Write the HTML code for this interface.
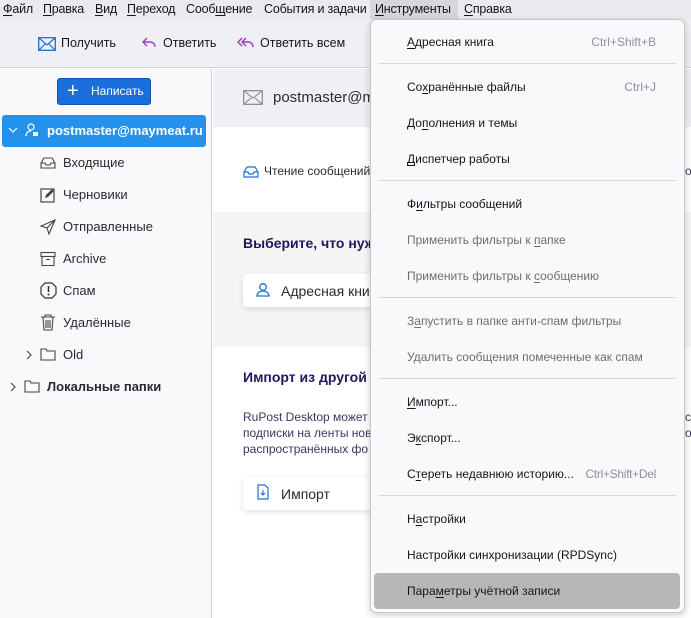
<!DOCTYPE html>
<html><head><meta charset="utf-8"><style>
*{margin:0;padding:0;box-sizing:border-box}
body{width:691px;height:618px;overflow:hidden;position:relative;background:#fff;font-family:"Liberation Sans","Noto Sans CJK SC",sans-serif;font-size:13px;color:#15141a}
.a{position:absolute;white-space:nowrap}
u{text-decoration:underline;text-underline-offset:2px}
.mb{position:absolute;top:2px;font-size:12.5px;letter-spacing:-0.2px;white-space:nowrap}
.mi{position:absolute;left:36px;font-size:12px;color:#15141a;white-space:nowrap}
.dis{color:#6e6e73}
.sc{position:absolute;right:28px;font-size:12px;color:#8f8f9d;white-space:nowrap}
.sep{position:absolute;left:8px;right:8px;height:1px;background:#d7d7db}
.fi{position:absolute;left:63px;font-size:13px;color:#2b2a33;white-space:nowrap}
.ic{position:absolute;left:40px}
</style></head><body>
<!-- menubar -->
<div class="a" style="left:0;top:0;width:691px;height:19px;background:#ebebef"></div>
<div class="a" style="left:370px;top:0;width:88px;height:19px;background:#d6d6db"></div>
<div class="mb" style="left:3px"><u>Ф</u>айл</div>
<div class="mb" style="left:43px"><u>П</u>равка</div>
<div class="mb" style="left:95px"><u>В</u>ид</div>
<div class="mb" style="left:127px"><u>П</u>ереход</div>
<div class="mb" style="left:186px">Сооб<u>щ</u>ение</div>
<div class="mb" style="left:264px">События и задачи</div>
<div class="mb" style="left:375px"><u>И</u>нструменты</div>
<div class="mb" style="left:464px"><u>С</u>правка</div>
<!-- toolbar -->
<div class="a" style="left:0;top:19px;width:691px;height:49px;background:#f0f0f4;border-bottom:1px solid #d4d4d8"></div>
<svg class="a" style="left:38px;top:37px" width="18" height="14" viewBox="0 0 18 14"><rect x=".7" y=".7" width="16.6" height="12.6" fill="none" stroke="#1a6ed8" stroke-width="1.3"/><path d="M1 1l8 7 8-7M1 13l6-6M17 13l-6-6" fill="none" stroke="#1a6ed8" stroke-width="1.2"/></svg>
<div class="a" style="left:61px;top:36px;font-size:12.5px">Получить</div>
<svg class="a" style="left:142px;top:37px" width="14" height="12" viewBox="0 0 14 12"><path d="M5 1L1 5l4 4M1 5h7c3 0 5 2 5 5" fill="none" stroke="#a03cc0" stroke-width="1.4"/></svg>
<div class="a" style="left:163px;top:36px;font-size:12.5px">Ответить</div>
<svg class="a" style="left:237px;top:37px" width="17" height="12" viewBox="0 0 17 12"><path d="M5 1L1 5l4 4M9 1L5 5l4 4M5 5h6c3 0 5 2 5 5" fill="none" stroke="#a03cc0" stroke-width="1.4"/></svg>
<div class="a" style="left:260px;top:36px;font-size:12.5px">Ответить всем</div>
<!-- sidebar -->
<div class="a" style="left:0;top:69px;width:212px;height:549px;background:#f9f9fb;border-right:1px solid #cfcfd8"></div>
<div class="a" style="left:57px;top:78px;width:94px;height:27px;background:#1a6fdc;border-radius:3px;border:1px solid #0f56b3;color:#fff;font-size:12px;line-height:25px"><span style="position:absolute;left:9px;top:0;line-height:24px;font-size:20px">+</span><span style="position:absolute;left:33px">Написать</span></div>
<div class="a" style="left:2px;top:115px;width:204px;height:32px;background:#2492ea;border-radius:3px"></div>
<svg class="a" style="left:8px;top:127px" width="10" height="7" viewBox="0 0 10 7"><path d="M1 1l4 4 4-4" fill="none" stroke="#fff" stroke-width="1.2"/></svg>
<svg class="a" style="left:25px;top:123px" width="14" height="14" viewBox="0 0 14 14"><circle cx="6" cy="4" r="3" fill="none" stroke="#fff" stroke-width="1.2"/><path d="M1 13c0-3 2-5 5-5" fill="none" stroke="#fff" stroke-width="1.2"/><rect x="8" y="9" width="5" height="4" fill="#fff"/></svg>
<div class="a" style="left:47px;top:123px;color:#fff;font-weight:bold;font-size:13px">postmaster@maymeat.ru</div>
<svg class="ic a" style="top:157px" width="16" height="12" viewBox="0 0 16 12"><path d="M1 6l3-5h8l3 5v5H1zM1 6h4l1 2h4l1-2h4" fill="none" stroke="#444" stroke-width="1.1"/></svg>
<div class="fi" style="top:155px">Входящие</div>
<svg class="ic a" style="top:187px" width="16" height="16" viewBox="0 0 16 16"><rect x="1" y="2" width="13" height="13" fill="none" stroke="#444" stroke-width="1.2"/><path d="M5 11l1-3 6-6 2 2-6 6z" fill="#444"/></svg>
<div class="fi" style="top:187px">Черновики</div>
<svg class="ic a" style="top:219px" width="16" height="16" viewBox="0 0 16 16"><path d="M15 1L1 7l6 2 2 6zM15 1L7 9" fill="none" stroke="#444" stroke-width="1.1"/></svg>
<div class="fi" style="top:219px">Отправленные</div>
<svg class="ic a" style="top:251px" width="16" height="16" viewBox="0 0 16 16"><rect x="1" y="1.5" width="14" height="4" fill="none" stroke="#444" stroke-width="1.1"/><path d="M2 5.5v9h12v-9M6 8.5h4" fill="none" stroke="#444" stroke-width="1.1"/></svg>
<div class="fi" style="top:251px">Archive</div>
<svg class="ic a" style="top:282px" width="17" height="17" viewBox="0 0 17 17"><path d="M5 1h7l4 4v7l-4 4H5l-4-4V5z" fill="none" stroke="#333" stroke-width="1.2"/><path d="M8.5 4v6" stroke="#333" stroke-width="1.6"/><circle cx="8.5" cy="12.5" r="1" fill="#333"/></svg>
<div class="fi" style="top:283px">Спам</div>
<svg class="ic a" style="top:314px" width="16" height="17" viewBox="0 0 16 17"><path d="M1 3h14M5 3V1h6v2M3 3l1 13h8l1-13M6 6v8M8 6v8M10 6v8" fill="none" stroke="#444" stroke-width="1.1"/></svg>
<div class="fi" style="top:315px">Удалённые</div>
<svg class="a" style="left:26px;top:350px" width="6" height="10" viewBox="0 0 6 10"><path d="M1 1l4 4-4 4" fill="none" stroke="#444" stroke-width="1.1"/></svg>
<svg class="a" style="left:40px;top:348px" width="16" height="13" viewBox="0 0 16 13"><path d="M1 1h5l1 2h8v9H1z" fill="none" stroke="#444" stroke-width="1.1"/></svg>
<div class="fi" style="top:347px">Old</div>
<svg class="a" style="left:10px;top:382px" width="6" height="10" viewBox="0 0 6 10"><path d="M1 1l4 4-4 4" fill="none" stroke="#444" stroke-width="1.1"/></svg>
<svg class="a" style="left:24px;top:380px" width="16" height="13" viewBox="0 0 16 13"><path d="M1 1h5l1 2h8v9H1z" fill="none" stroke="#444" stroke-width="1.1"/></svg>
<div class="a" style="left:47px;top:379px;font-weight:bold;font-size:13px;color:#2b2a33">Локальные папки</div>
<!-- main -->
<div class="a" style="left:213px;top:69px;width:478px;height:58px;background:#f0f0f4"></div>
<svg class="a" style="left:243px;top:90px" width="20" height="15" viewBox="0 0 20 15"><rect x=".7" y=".7" width="18.6" height="13.6" fill="none" stroke="#888" stroke-width="1.2"/><path d="M1 1l9 7 9-7M1 14l7-6M19 14l-7-6" fill="none" stroke="#888" stroke-width="1.1"/></svg>
<div class="a" style="left:273px;top:89px;font-size:15px;color:#2b2a33">postmaster@ma</div>
<svg class="a" style="left:243px;top:166px" width="16" height="12" viewBox="0 0 16 12"><path d="M1 6l3-5h8l3 5v5H1zM1 6h4l1 2h4l1-2h4" fill="none" stroke="#1a6fdc" stroke-width="1.2"/></svg>
<div class="a" style="left:264px;top:164px;font-size:12px;color:#2b2a33">Чтение сообщений</div>
<div class="a" style="left:213px;top:212px;width:478px;height:135px;background:#f5f5f6"></div>
<div class="a" style="left:243px;top:235px;font-size:14px;font-weight:bold;color:#1c1b5e">Выберите, что нужн</div>
<div class="a" style="left:243px;top:274px;width:160px;height:33px;background:#fff;border-radius:4px;box-shadow:0 2px 6px rgba(0,0,0,.12)"></div>
<svg class="a" style="left:256px;top:282px" width="14" height="15" viewBox="0 0 14 15"><circle cx="7" cy="5" r="3.3" fill="none" stroke="#1a6fdc" stroke-width="1.3"/><path d="M1 14c0-3 3-5 6-5s6 2 6 5z" fill="none" stroke="#1a6fdc" stroke-width="1.3"/></svg>
<div class="a" style="left:281px;top:283px;font-size:14px;color:#2b2a33">Адресная книга</div>
<div class="a" style="left:243px;top:369px;font-size:14px;font-weight:bold;color:#1c1b5e">Импорт из другой п</div>
<div class="a" style="left:243px;top:409px;font-size:12px;line-height:16px;color:#3a3760">RuPost Desktop может<br>подписки на ленты нов<br>распространённых фо</div>
<div class="a" style="left:685px;top:409px;font-size:12px;line-height:16px;color:#3a3760">с<br>о</div>
<div class="a" style="left:685px;top:164px;font-size:12px;color:#3a3760">о</div>
<div class="a" style="left:243px;top:477px;width:160px;height:33px;background:#fff;border-radius:4px;box-shadow:0 2px 6px rgba(0,0,0,.12)"></div>
<svg class="a" style="left:257px;top:484px" width="12" height="16" viewBox="0 0 12 16"><path d="M1 1h7l3 3v11H1z" fill="none" stroke="#1a6fdc" stroke-width="1.2"/><path d="M6 6v5M4 9l2 2 2-2" fill="none" stroke="#1a6fdc" stroke-width="1.1"/></svg>
<div class="a" style="left:281px;top:486px;font-size:14px;color:#2b2a33">Импорт</div>
<!-- dropdown -->
<div class="a" style="left:370px;top:19px;width:315px;height:594px;background:#f9f9fb;border:1px solid #c8c8cc;border-radius:6px;box-shadow:0 2px 8px rgba(0,0,0,.2)">
<div class="mi" style="top:15px"><u>А</u>дресная книга</div><div class="sc" style="top:15px">Ctrl+Shift+B</div>
<div class="sep" style="top:43px"></div>
<div class="mi" style="top:60px">Со<u>х</u>ранённые файлы</div><div class="sc" style="top:60px">Ctrl+J</div>
<div class="mi" style="top:96px">До<u>п</u>олнения и темы</div>
<div class="mi" style="top:132px"><u>Д</u>испетчер работы</div>
<div class="sep" style="top:160px"></div>
<div class="mi" style="top:177px">Ф<u>и</u>льтры сообщений</div>
<div class="mi dis" style="top:213px">Применить фильтры к <u>п</u>апке</div>
<div class="mi dis" style="top:249px">Применить фильтры к <u>с</u>ообщению</div>
<div class="sep" style="top:277px"></div>
<div class="mi dis" style="top:294px">З<u>а</u>пустить в папке анти-спам фильтры</div>
<div class="mi dis" style="top:330px">Удалить сообщения помеченные как спам</div>
<div class="sep" style="top:358px"></div>
<div class="mi" style="top:375px"><u>И</u>мпорт...</div>
<div class="mi" style="top:411px">Э<u>к</u>спорт...</div>
<div class="mi" style="top:447px">С<u>т</u>ереть недавнюю историю...</div><div class="sc" style="top:447px;letter-spacing:-0.3px">Ctrl+Shift+Del</div>
<div class="sep" style="top:475px"></div>
<div class="mi" style="top:492px">Н<u>а</u>стройки</div>
<div class="mi" style="top:528px">Настройки синхронизации (RPDSync)</div>
<div class="a" style="left:3px;top:553px;width:306px;height:36px;background:#b7b7b9;border-radius:4px"></div>
<div class="mi" style="top:564px">Пара<u>м</u>етры учётной записи</div>
</div>
</body></html>
